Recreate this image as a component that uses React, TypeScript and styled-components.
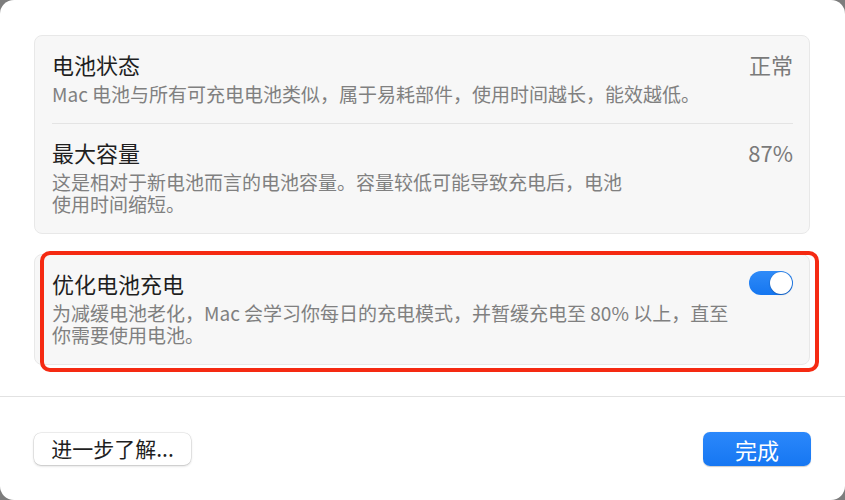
import React from "react";
import styled, { createGlobalStyle } from "styled-components";

const Global = createGlobalStyle`
  html, body { margin: 0; padding: 0; background: #7d7d7d; }
  body { font-family: "Noto Sans CJK SC", "Noto Sans", sans-serif; }
  * { box-sizing: border-box; }
`;

const Window = styled.div`
  width: 845px;
  height: 500px;
  background: #ffffff;
  border-radius: 14px;
  overflow: hidden;
  display: flex;
  flex-direction: column;
`;

const Content = styled.div`
  flex: 1;
  padding: 35px 35px 0 34px;
  display: flex;
  flex-direction: column;
  gap: 20px;
`;

const Card = styled.div`
  position: relative;
  background: #f7f7f7;
  border: 1px solid #e8e8e8;
  border-radius: 8px;
  padding: 0 16px 0 17px;
`;

const Row = styled.div<{ $divider?: boolean }>`
  display: flex;
  align-items: flex-start;
  justify-content: space-between;
  padding: 14px 0 17px;
  border-top: ${(p) => (p.$divider ? "1px solid #e4e4e4" : "none")};
`;

const TextCol = styled.div`
  display: flex;
  flex-direction: column;
  gap: 5px;
`;

const Title = styled.div`
  font-size: 22px;
  line-height: 28px;
  color: #1f1f1f;
`;

const DescBlock = styled.div`
  display: flex;
  flex-direction: column;
`;

const Desc = styled.div`
  font-size: 19px;
  line-height: 22.5px;
  color: #808080;
  white-space: nowrap;
`;

const Value = styled.div`
  font-size: 22px;
  line-height: 28px;
  color: #7a7a7a;
`;

const Toggle = styled.div`
  width: 44px;
  height: 24px;
  margin-top: 2px;
  border-radius: 12px;
  background: linear-gradient(#2f8bf8, #1576f0);
  position: relative;
  flex-shrink: 0;
`;

const Knob = styled.div`
  position: absolute;
  right: 1px;
  top: 1px;
  width: 22px;
  height: 22px;
  border-radius: 50%;
  background: #ffffff;
  box-shadow: 0 0 0 0.5px rgba(0, 0, 0, 0.12), 0 1px 2px rgba(0, 0, 0, 0.15);
`;

const Highlight = styled.div`
  position: absolute;
  left: 5px;
  top: -4px;
  right: -10px;
  bottom: -8px;
  border: 4.5px solid #f52a12;
  border-radius: 10px;
  pointer-events: none;
`;

const Footer = styled.div`
  height: 104px;
  border-top: 1px solid #e2e2e2;
  display: flex;
  align-items: center;
  justify-content: space-between;
  padding: 0 34px 0 34px;
`;

const Button = styled.button<{ $primary?: boolean }>`
  height: ${(p) => (p.$primary ? "34px" : "32px")};
  min-width: ${(p) => (p.$primary ? "108px" : "157px")};
  padding: 0 14px;
  border: none;
  border-radius: 7px;
  font-family: "Noto Sans CJK SC", "Noto Sans", sans-serif;
  font-size: ${(p) => (p.$primary ? "22px" : "21px")};
  line-height: 1;
  color: ${(p) => (p.$primary ? "#ffffff" : "#1f1f1f")};
  background: ${(p) => (p.$primary ? "linear-gradient(#2b88fb, #1677f2)" : "#ffffff")};
  box-shadow: ${(p) =>
    p.$primary
      ? "0 0.5px 1px rgba(0,0,0,0.2)"
      : "0 0 0 0.5px rgba(0,0,0,0.12), 0 1px 2.5px rgba(0,0,0,0.2)"};
  display: flex;
  align-items: center;
  justify-content: center;
`;

type Item = { title: string; lines: string[]; value?: string; toggle?: boolean };

const card1: Item[] = [
  {
    title: "电池状态",
    lines: ["Mac 电池与所有可充电电池类似，属于易耗部件，使用时间越长，能效越低。"],
    value: "正常",
  },
  {
    title: "最大容量",
    lines: ["这是相对于新电池而言的电池容量。容量较低可能导致充电后，电池", "使用时间缩短。"],
    value: "87%",
  },
];

const card2: Item = {
  title: "优化电池充电",
  lines: ["为减缓电池老化，Mac 会学习你每日的充电模式，并暂缓充电至 80% 以上，直至", "你需要使用电池。"],
  toggle: true,
};

function SettingRow({ item, divider }: { item: Item; divider?: boolean }) {
  return (
    <Row $divider={divider}>
      <TextCol>
        <Title>{item.title}</Title>
        <DescBlock>
          {item.lines.map((l) => (
            <Desc key={l}>{l}</Desc>
          ))}
        </DescBlock>
      </TextCol>
      {item.value && <Value>{item.value}</Value>}
      {item.toggle && (
        <Toggle>
          <Knob />
        </Toggle>
      )}
    </Row>
  );
}

export default function App() {
  return (
    <>
      <Global />
      <Window>
        <Content>
          <Card>
            {card1.map((it, i) => (
              <SettingRow key={it.title} item={it} divider={i > 0} />
            ))}
          </Card>
          <Card>
            <SettingRow item={card2} />
            <Highlight />
          </Card>
        </Content>
        <Footer>
          <Button>进一步了解...</Button>
          <Button $primary>完成</Button>
        </Footer>
      </Window>
    </>
  );
}
